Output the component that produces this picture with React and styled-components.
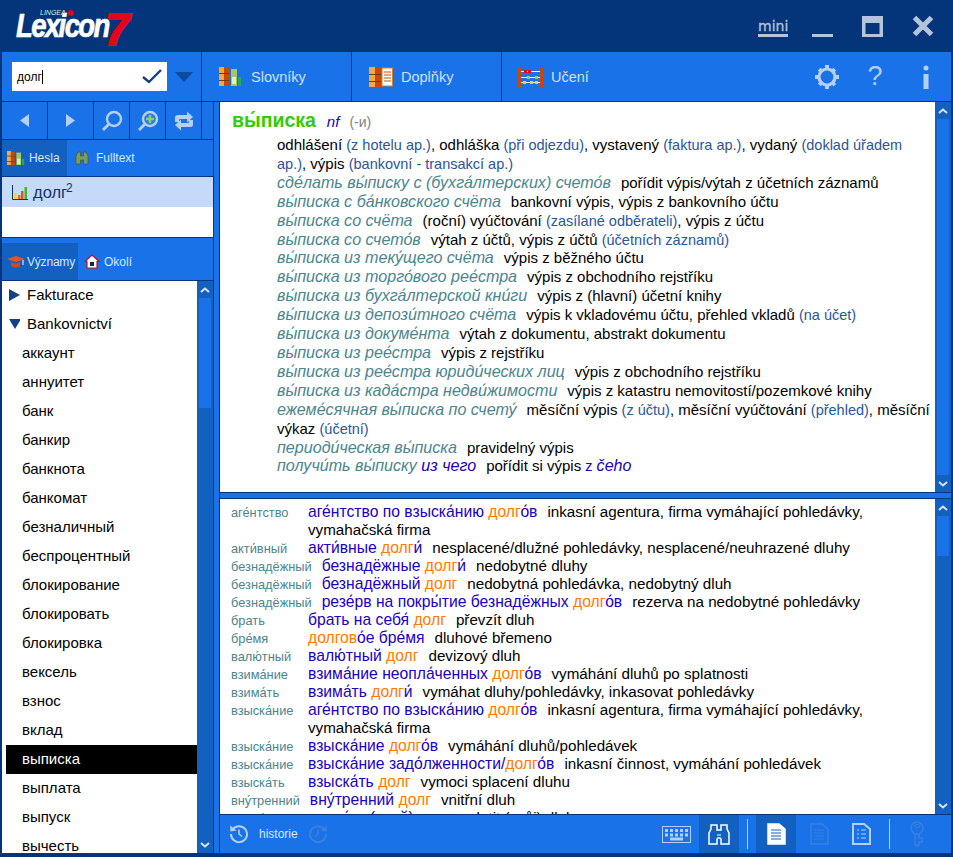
import React from "react";
import styled, { createGlobalStyle } from "styled-components";

const DARK = "#04357a";
const BLUE = "#1a72e8";
const DEEP = "#1260c0";
const PALE = "#b5d0f5";

const Global = createGlobalStyle`
  html, body { margin: 0; padding: 0; background: ${DARK}; }
  * { box-sizing: border-box; }
  body { font-family: "Liberation Sans", Arial, sans-serif; }
`;

const Win = styled.div`
  width: 953px; height: 857px; background: ${DARK}; padding: 0 2px 4px 2px;
  display: flex; flex-direction: column; overflow: hidden;
`;
const TitleBar = styled.header`
  height: 52px; flex: none; display: flex; align-items: center; padding: 0 17px 0 14px;
`;
const Logo = styled.div`
  display: flex; align-items: flex-start; height: 46px; position: relative; color: #fff;
  font-style: italic; font-weight: 700;
`;
const LogoWord = styled.span`
  display: block; width: 90px; font-size: 34px; letter-spacing: -2px; line-height: 34px; margin-top: 5px;
  -webkit-text-stroke: 0.7px #fff; transform: scaleX(.81); transform-origin: 0 50%; white-space: nowrap;
`;
const LogoSeven = styled.span`
  display: block; width: 24px; font-size: 44px; line-height: 40px; color: #e2061c; margin: 7px 0 0 -1px;
  -webkit-text-stroke: 2px #e2061c;
`;
const LogoBrand = styled.span`
  position: absolute; left: 24px; top: 6px; font-size: 7px; font-weight: 400; color: #dfe6f0;
  display: flex; align-items: center; gap: 2px; z-index: 1;
`;
const RedDot = styled.i`
  width: 6px; height: 6px; border-radius: 50%; background: #e2061c; display: block;
`;
const WinControls = styled.div`
  margin-left: auto; display: flex; align-items: center; height: 52px;
`;
const Mini = styled.span`
  color: #b4c4dc; font: 400 14px "DejaVu Sans", sans-serif; border-bottom: 3px solid #b4c4dc; line-height: 15px;
  width: 30px; text-align: center; margin-right: 24px; margin-top: 4px; -webkit-text-stroke: .3px #b4c4dc;
`;
const WinBtn = styled.svg`
  display: block; flex: none; margin-left: ${p => p.$ml || 0}px;
`;

const Toolbar = styled.div`
  height: 50px; flex: none; background: ${BLUE}; border-bottom: 1px solid ${DARK}; display: flex; align-items: stretch;
`;
const SearchCell = styled.div`
  width: 200px; border-right: 1px solid ${DARK}; display: flex; align-items: center; padding: 0 8px 0 10px; gap: 8px;
`;
const SearchBox = styled.div`
  width: 155px; height: 29px; background: #fff; display: flex; align-items: center; padding: 0 5px 0 5px;
  justify-content: space-between; font-size: 12px; color: #000;
`;
const Caret = styled.span`
  display: inline-block; width: 1px; height: 14px; background: #000; vertical-align: -3px;
`;
const ToolBtn = styled.div`
  width: 150px; border-right: ${p => p.$last ? "0" : `1px solid ${DARK}`}; display: flex; align-items: center; gap: ${p => p.$gap || 9}px;
  padding-left: ${p => p.$pl || 17}px; color: #cfe0fa; font-size: 14.5px;
`;
const ToolEnd = styled.div`
  margin-left: auto; display: flex; align-items: center; padding-right: 21px;
`;
const Help = styled.span`
  width: 16px; margin-left: 27px; margin-right: 39px; font-size: 27px; line-height: 27px; color: ${PALE}; text-align: center;
`;

const Body = styled.div`
  flex: 1; min-height: 0; display: flex; background: ${BLUE};
`;
const Left = styled.aside`
  width: 212px; flex: none; display: flex; flex-direction: column; border-right: 1px solid ${DARK};
`;
const NavRow = styled.div`
  height: 38px; flex: none; display: flex; border-bottom: 1px solid ${DARK};
`;
const NavCell = styled.div`
  width: ${p => p.$w}px; flex: none; border-right: 1px solid ${DARK}; display: flex; align-items: center; justify-content: center;
`;
const Tabs = styled.div`
  height: 37px; flex: none; display: flex; border-bottom: ${p => p.$line ? `1px solid ${DARK}` : "0"};
`;
const Tab = styled.div`
  width: ${p => p.$w}px; flex: none; display: flex; align-items: center; background: ${p => p.$on ? DEEP : "transparent"};
  color: #d8e6fb; font-size: 12px; letter-spacing: ${p => p.$ls || 0}px; gap: ${p => p.$gap ?? 4}px; padding-left: ${p => p.$pl ?? 5}px;
`;
const Results = styled.div`
  height: 61px; flex: none; background: #fff; border-bottom: 1px solid ${DARK};
`;
const ResultRow = styled.div`
  height: 30px; background: #c5daf8; display: flex; align-items: center; padding-left: 10px; gap: 5px;
  font-size: 16.5px; color: #14306a;
  sup { font-size: 12px; line-height: 0; position: relative; top: 1px; left: -1px; vertical-align: super; }
`;
const Spacer = styled.div`
  height: 5px; flex: none;
`;
const TreeWrap = styled.div`
  flex: 1; min-height: 0; display: flex; border-top: 1px solid ${DARK};
`;
const Tree = styled.ul`
  flex: 1; min-width: 0; margin: 0; padding: 0; list-style: none; background: #fff; overflow: hidden;
`;
const TreeItem = styled.li`
  height: 29px; display: flex; align-items: center; font-size: 15px; line-height: 28px; padding-bottom: 1px;
  color: ${p => p.$on ? "#fff" : "#000"};
  background: ${p => p.$on ? "#000" : "transparent"}; margin-left: ${p => p.$head ? 0 : 4}px;
  padding-left: ${p => p.$head ? 7 : 16}px; gap: 7px;
`;

const Bar = styled.div`
  width: ${p => p.$w || 16}px; flex: none; display: flex; flex-direction: column; background: ${DEEP};
`;
const BarBtn = styled.div`
  height: 17px; flex: none; display: flex; align-items: center; justify-content: center; background: ${DEEP};
`;
const Thumb = styled.div`
  margin: 0 2px; height: ${p => p.$h}px; flex: ${p => p.$grow ? 1 : "none"}; background: ${BLUE};
`;
const Fill = styled.div`
  flex: 1;
`;

const Gutter = styled.div`
  width: 6px; flex: none; border-right: 1px solid ${DARK};
`;
const Main = styled.main`
  flex: 1; min-width: 0; display: flex; flex-direction: column;
`;
const Panel = styled.section`
  height: ${p => p.$h}px; flex: none; display: flex; background: #fff;
  border-bottom: 1px solid ${DARK}; ${p => p.$top && `border-top: 1px solid ${DARK};`}
`;
const PanelGap = styled.div`
  height: 5px; flex: none;
`;
const Content = styled.div`
  flex: 1; min-width: 0; overflow: hidden;
`;
const Dict = styled(Content)`
  padding: 7px 0 0 12px; font-size: 15px; line-height: 18.9px; color: #000;
`;
const Head = styled.div`
  display: flex; align-items: baseline; height: 27px; line-height: 22px;
`;
const HeadWord = styled.span`
  font-size: 19.5px; font-weight: 700; color: #33cc00; margin-right: 11px;
`;
const Gram = styled.span`
  color: #2000c0; font-style: italic; font-size: 15px; margin-right: 10px;
`;
const GramNote = styled.span`
  color: #808080; font-size: 14px;
`;
const Sense = styled.div`
  padding-left: 45px;
`;
const Ex = styled.i`
  color: #4a8590; font-size: 16.1px; line-height: 1; margin-right: ${p => p.$tight ? 0 : 10}px;
`;
const Note = styled.span`
  color: ${p => p.$ref ? "#2000c0" : "#2a55a0"}; font-size: 14.5px; line-height: 1;
`;
const Pointer = styled.i`
  color: #2000c0; font-size: 16.1px; line-height: 1; margin-right: ${p => p.$gap || 0}px;
`;

const Colloc = styled(Content)`
  padding: 4px 4px 0 0; font-size: 15.2px; line-height: 18px; color: #000;
`;
const Row = styled.div`
  padding-left: 88px; text-indent: -77px;
`;
const Lemma = styled.span`
  display: inline-block; min-width: 67px; margin-right: 10px; text-indent: 0; font-size: 12.8px; line-height: 1; color: #4a8590;
`;
const Phrase = styled.span`
  color: #2000c0; margin-right: 10px; font-size: 15.7px; line-height: 1;
  b { color: #ff7a00; font-weight: 400; }
`;

const Status = styled.footer`
  flex: 1; min-height: 0; display: flex; align-items: stretch; padding-left: 9px; color: #d8e6fb; font-size: 12px;
`;
const Hist = styled.div`
  display: flex; align-items: center; gap: 10px;
`;
const StatusEnd = styled.div`
  margin-left: auto; display: flex; align-items: center; padding-right: 11px;
`;
const StatusBtn = styled.div`
  width: ${p => p.$w}px; height: 100%; flex: none; display: flex; align-items: center; justify-content: center;
  background: ${p => p.$on ? DEEP : "transparent"}; margin-left: ${p => p.$ml || 0}px;
`;
const VSep = styled.div`
  width: 1px; height: 30px; flex: none; background: ${PALE}; margin: 0 ${p => p.$r ?? 8}px 0 ${p => p.$l ?? 8}px;
`;

const Up = () => <svg width="10" height="6" viewBox="0 0 10 6"><path d="M1 5l4-3.5L9 5" fill="none" stroke="#d8e6fb" strokeWidth="2" /></svg>;
const Down = () => <svg width="10" height="6" viewBox="0 0 10 6"><path d="M1 1l4 3.5L9 1" fill="none" stroke="#d8e6fb" strokeWidth="2" /></svg>;

const Books = ({ s = 1 }) => (
  <svg width={23 * s} height={19 * s} viewBox="0 0 23 19">
    <rect x="0" y="0" width="5" height="19" fill="#f7a83c" />
    <rect x="5" y="1" width="5" height="18" fill="#c8480c" />
    <rect x="0" y="6" width="10" height="1" fill="#7a3a10" />
    <rect x="0" y="13" width="10" height="1" fill="#7a3a10" />
    <rect x="12" y="2" width="6" height="17" fill="#a8c85c" />
    <rect x="13" y="10" width="4" height="7" fill="#e6eec0" />
    <rect x="19" y="10" width="3" height="9" fill="#22aa55" />
  </svg>
);
const Sheets = () => (
  <svg width="24" height="20" viewBox="0 0 24 20">
    <rect x="0" y="0" width="6" height="20" fill="#f7a83c" />
    <rect x="6" y="1" width="6" height="19" fill="#c8480c" />
    <rect x="0" y="7" width="12" height="1" fill="#7a3a10" />
    <rect x="0" y="14" width="12" height="1" fill="#7a3a10" />
    <rect x="13" y="1" width="10.500" height="18" fill="#fff" stroke="#e07a20" />
    <path d="M15 5h7M15 8h7M15 11h7M15 14h7" stroke="#c8480c" />
  </svg>
);
const Abacus = () => (
  <svg width="25" height="20" viewBox="0 0 25 20">
    <rect x="0" y="0" width="3" height="20" fill="#c8480c" />
    <rect x="22" y="0" width="3" height="20" fill="#c8480c" />
    <path d="M3 4.500h19M3 10.500h19M3 15.500h19" stroke="#fff" />
    <path d="M6 3h3v3H6zM10 3h3v3h-3z" fill="#e2061c" />
    <path d="M9 9h3v3H9zM17 9h3v3h-3z" fill="#a8c85c" />
    <path d="M5 14h3v3H5zM12 14h3v3h-3zM17 14h3v3h-3z" fill="#ffd21e" />
  </svg>
);
const Gear = () => (
  <svg width="26" height="26" viewBox="0 0 26 26">
    <circle cx="13" cy="13" r="8" fill="none" stroke={PALE} strokeWidth="3.200" />
    <path d="M11 1h4v3.500h-4zM11 21.500h4V25h-4zM1 11h3.500v4H1zM21.500 11H25v4h-3.500zM3.800 6.600l2.800-2.800 2.500 2.500-2.800 2.800zM16.900 6.300l2.500-2.500 2.800 2.800-2.500 2.500zM3.800 19.400l2.500-2.500 2.800 2.800-2.500 2.500zM16.900 19.700l2.500-2.500 2.800 2.500-2.500 2.800z" fill={PALE} />
  </svg>
);
const Glass = ({ plus }) => (
  <svg width="22" height="22" viewBox="0 0 22 22">
    <circle cx="13" cy="9" r="7" fill={plus ? "#2f7fd8" : "none"} stroke={PALE} strokeWidth="2.400" />
    <path d="M8 14l-6 6" stroke={PALE} strokeWidth="2.800" />
    {plus && <path d="M13 5v8M9 9h8" stroke="#8fcf6c" strokeWidth="2.400" />}
  </svg>
);
const Swap = () => (
  <svg width="20" height="20" viewBox="0 0 20 20">
    <path d="M1 11V6.500Q1 4 4 4h9V0.500L19 6l-6 5.500V8H6q-1 0-1 1v2zM19 9v4.500q0 2.500-3 2.500H7v3.500L1 14l6-5.500V12h7q1 0 1-1V9z" fill={PALE} />
  </svg>
);
const Binoc = () => (
  <svg width="14" height="14" viewBox="0 0 14 14">
    <path d="M1 5l2-4h2.500v4h3V1H11l2 4v8H8.500V9h-3v4H1z" fill="#7c9c5c" stroke="#3a5030" strokeWidth=".6" />
  </svg>
);
const BinocLine = () => (
  <svg width="24" height="22" viewBox="0 0 24 22">
    <path d="M2 10l2-4V2h6v5h4V2h6v4l2 4v11h-8v-5l-1-1h-2l-1 1v5H2z" fill="none" stroke="#fff" strokeWidth="1.500" />
    <path d="M10 12h4" stroke="#fff" />
  </svg>
);
const Cap = () => (
  <svg width="19" height="14" viewBox="0 0 19 14">
    <path d="M0 4l9-3 9 3-9 3z" fill="#e8541c" />
    <path d="M4 7v4c3 2 7 2 9 0V7l-4 1.500z" fill="#d8480c" />
    <path d="M16 5v5" stroke="#fff" />
  </svg>
);
const House = () => (
  <svg width="16" height="15" viewBox="0 0 16 15">
    <path d="M8 1l7 6.500h-2V14H3V7.500H1z" fill="#fff" stroke="#d01010" strokeWidth="1.200" />
    <path d="M6 8h4v4H6z" fill="#223" />
  </svg>
);
const ChartIcon = () => (
  <svg width="16" height="15" viewBox="0 0 16 15">
    <path d="M.5 0v14.500H16" fill="none" stroke="#04357a" />
    <rect x="2" y="8" width="2.500" height="6" fill="#ffd21e" />
    <rect x="6" y="10" width="2.500" height="4" fill="#f0662c" />
    <rect x="9" y="6" width="2.500" height="8" fill="#e8541c" />
    <rect x="12.500" y="2" width="2.500" height="12" fill="#48b030" />
  </svg>
);
const Doc = ({ c = "#fff", fill = "none", sw = 1.500, ink, lines = "M4 7h10M4 10h10M4 13h10M4 16h10" }) => (
  <svg width="19" height="22" viewBox="0 0 19 22">
    <path d="M1 1h11l6 5v15H1z" fill={fill} stroke={c} strokeWidth={sw} />
    <path d={lines} stroke={ink || c} strokeWidth="1.200" />
  </svg>
);
const Keyboard = () => (
  <svg width="29" height="17" viewBox="0 0 29 17">
    <rect x=".5" y=".5" width="28" height="16" fill="none" stroke={PALE} />
    <path d="M8 11.500h13v3H8z" fill={PALE} />
    <path d="M3 3h3v3H3zM8 3h3v3H8zM13 3h3v3h-3zM18 3h3v3h-3zM23 3h3v3h-3zM3 7.500h3v3H3zM8 7.500h3v3H8zM13 7.500h3v3h-3zM18 7.500h3v3h-3zM23 7.500h3v3h-3z" fill={PALE} />
  </svg>
);
const Clock = ({ c, flip }) => (
  <svg width="20" height="20" viewBox="0 0 20 20" style={flip ? { transform: "scaleX(-1)" } : undefined}>
    <path d="M3.500 5.500A8 8 0 1 1 2 10" fill="none" stroke={c} strokeWidth="2" />
    <path d="M1 1.500l.5 6 6-1z" fill={c} />
    <path d="M10 5.500V10l3 2.500" fill="none" stroke={c} strokeWidth="1.600" />
  </svg>
);
const Key = () => (
  <svg width="16" height="26" viewBox="0 0 16 26">
    <circle cx="8" cy="7" r="6" fill="none" stroke="#3a80dc" strokeWidth="1.600" />
    <ellipse cx="8" cy="5" rx="3" ry="1.500" fill="none" stroke="#3a80dc" />
    <path d="M6 13v11l2 1 2-1v-3h3v-4h-3v-4" fill="none" stroke="#3a80dc" strokeWidth="1.400" />
  </svg>
);

const treeItems = ["аккаунт", "аннуитет", "банк", "банкир", "банкнота", "банкомат", "безналичный", "беспроцентный", "блокирование", "блокировать", "блокировка", "вексель", "взнос", "вклад", "выписка", "выплата", "выпуск", "вычесть"];

const senses = [
  [["Ex", "сде́лать вы́писку с (бухга́лтерских) счето́в"], ["T", "pořídit výpis/výtah z účetních záznamů"]],
  [["Ex", "вы́писка с ба́нковского счёта"], ["T", "bankovní výpis, výpis z bankovního účtu"]],
  [["Ex", "вы́писка со счёта"], ["T", "(roční) vyúčtování "], ["N", "(zasílané odběrateli)"], ["T", ", výpis z účtu"]],
  [["Ex", "вы́писка со счето́в"], ["T", "výtah z účtů, výpis z účtů "], ["N", "(účetních záznamů)"]],
  [["Ex", "вы́писка из теку́щего счёта"], ["T", "výpis z běžného účtu"]],
  [["Ex", "вы́писка из торго́вого рее́стра"], ["T", "výpis z obchodního rejstříku"]],
  [["Ex", "вы́писка из бухга́лтерской кни́ги"], ["T", "výpis z (hlavní) účetní knihy"]],
  [["Ex", "вы́писка из депози́тного счёта"], ["T", "výpis k vkladovému účtu, přehled vkladů "], ["N", "(na účet)"]],
  [["Ex", "вы́писка из докуме́нта"], ["T", "výtah z dokumentu, abstrakt dokumentu"]],
  [["Ex", "вы́писка из рее́стра"], ["T", "výpis z rejstříku"]],
  [["Ex", "вы́писка из рее́стра юриди́ческих лиц"], ["T", "výpis z obchodního rejstříku"]],
  [["Ex", "вы́писка из када́стра недви́жимости"], ["T", "výpis z katastru nemovitostí/pozemkové knihy"]],
  [["Ex", "ежеме́сячная вы́писка по счету́"], ["T", "měsíční výpis "], ["N", "(z účtu)"], ["T", ", měsíční vyúčtování "], ["N", "(přehled)"], ["T", ", měsíční výkaz "], ["N", "(účetní)"]],
  [["Ex", "периоди́ческая вы́писка"], ["T", "pravidelný výpis"]],
];

const rows = [
  ["аге́нтство", ["аге́нтство по взыска́нию ", "долг", "о́в"], "inkasní agentura, firma vymáhající pohledávky, vymahačská firma"],
  ["акти́вный", ["акти́вные ", "долг", "и́"], "nesplacené/dlužné pohledávky, nesplacené/neuhrazené dluhy"],
  ["безнадёжный", ["безнадёжные ", "долг", "и́"], "nedobytné dluhy"],
  ["безнадёжный", ["безнадёжный ", "долг", ""], "nedobytná pohledávka, nedobytný dluh"],
  ["безнадёжный", ["резе́рв на покры́тие безнадёжных ", "долг", "о́в"], "rezerva na nedobytné pohledávky"],
  ["брать", ["брать на себя́ ", "долг", ""], "převzít dluh"],
  ["бре́мя", ["", "долгов", "о́е бре́мя"], "dluhové břemeno"],
  ["валю́тный", ["валю́тный ", "долг", ""], "devizový dluh"],
  ["взима́ние", ["взима́ние неопла́ченных ", "долг", "о́в"], "vymáhání dluhů po splatnosti"],
  ["взима́ть", ["взима́ть ", "долг", "и́"], "vymáhat dluhy/pohledávky, inkasovat pohledávky"],
  ["взыска́ние", ["аге́нтство по взыска́нию ", "долг", "о́в"], "inkasní agentura, firma vymáhající pohledávky, vymahačská firma"],
  ["взыска́ние", ["взыска́ние ", "долг", "о́в"], "vymáhání dluhů/pohledávek"],
  ["взыска́ние", ["взыска́ние задо́лженности/", "долг", "о́в"], "inkasní činnost, vymáhání pohledávek"],
  ["взыска́ть", ["взыска́ть ", "долг", ""], "vymoci splacení dluhu"],
  ["вну́тренний", ["вну́тренний ", "долг", ""], "vnitřní dluh"],
  ["верну́ть", ["верну́ть (свой) ", "долг", ""], "splatit (svůj) dluh"],
];

export default function App() {
  return (
    <Win>
      <Global />
      <TitleBar>
        <Logo>
          <LogoBrand>LINGEA<RedDot /></LogoBrand>
          <LogoWord>Lexicon</LogoWord>
          <LogoSeven>7</LogoSeven>
        </Logo>
        <WinControls>
          <Mini>mini</Mini>
          <WinBtn width="21" height="21" viewBox="0 0 21 21"><rect y="18" width="21" height="3" fill="#b4c4dc" /></WinBtn>
          <WinBtn $ml="29" width="21" height="21" viewBox="0 0 21 21"><path d="M0 0h21v21H0zM3.500 7v11h14V7z" fill="#b4c4dc" fillRule="evenodd" /></WinBtn>
          <WinBtn $ml="29" width="22" height="22" viewBox="0 0 22 22"><path d="M2.500 2.500l17 17M19.500 2.500l-17 17" stroke="#b4c4dc" strokeWidth="5" /></WinBtn>
        </WinControls>
      </TitleBar>

      <Toolbar>
        <SearchCell>
          <SearchBox>
            <span>долг<Caret /></span>
            <svg width="20" height="15" viewBox="0 0 20 15"><path d="M1 8l6 5L19 1" fill="none" stroke="#123f7c" strokeWidth="2.400" /></svg>
          </SearchBox>
          <svg width="18" height="10" viewBox="0 0 18 10"><path d="M0 0h18L9 10z" fill="#0d4aa0" /></svg>
        </SearchCell>
        <ToolBtn><Books />Slovníky</ToolBtn>
        <ToolBtn $gap={8}><Sheets />Doplňky</ToolBtn>
        <ToolBtn $last $pl={16} $gap={8}><Abacus />Učení</ToolBtn>
        <ToolEnd>
          <Gear />
          <Help>?</Help>
          <svg width="8" height="24" viewBox="0 0 8 24"><path d="M1.500 3a2.500 2.500 0 1 1 5 0 2.500 2.500 0 1 1-5 0zM1.500 9h5v15h-5z" fill={PALE} /></svg>
        </ToolEnd>
      </Toolbar>

      <Body>
        <Left>
          <NavRow>
            <NavCell $w={46}><svg width="9" height="13" viewBox="0 0 9 13"><path d="M9 0v13L0 6.500z" fill={PALE} /></svg></NavCell>
            <NavCell $w={46}><svg width="9" height="13" viewBox="0 0 9 13"><path d="M0 0v13l9-6.500z" fill={PALE} /></svg></NavCell>
            <NavCell $w={36}><Glass /></NavCell>
            <NavCell $w={36}><Glass plus /></NavCell>
            <NavCell $w={36}><Swap /></NavCell>
          </NavRow>
          <Tabs $line>
            <Tab $w={65} $on><Books s={0.78} />Hesla</Tab>
            <Tab $w={80} $gap={7} $pl={8}><Binoc />Fulltext</Tab>
          </Tabs>
          <Results>
            <ResultRow><ChartIcon /><span>долг<sup>2</sup></span></ResultRow>
          </Results>
          <Spacer />
          <Tabs>
            <Tab $w={76} $gap={1} $ls={-0.2} $on><Cap />Významy</Tab>
            <Tab $w={70} $gap={4} $pl={6}><House />Okolí</Tab>
          </Tabs>
          <TreeWrap>
            <Tree>
              <TreeItem $head><svg width="11" height="12" viewBox="0 0 11 12"><path d="M0 0v12l11-6z" fill="#14408a" /></svg>Fakturace</TreeItem>
              <TreeItem $head><svg width="11" height="12" viewBox="0 0 11 12"><path d="M0 1h12L6 11z" fill="#14408a" /></svg>Bankovnictví</TreeItem>
              {treeItems.map(t => <TreeItem key={t} $on={t === "выписка"}>{t}</TreeItem>)}
            </Tree>
            <Bar>
              <BarBtn><Up /></BarBtn>
              <Thumb $h={110} />
              <Fill />
              <BarBtn><Down /></BarBtn>
            </Bar>
          </TreeWrap>
        </Left>
        <Gutter />
        <Main>
          <Panel $h={391}>
            <Dict>
              <Head>
                <HeadWord>вы́писка</HeadWord>
                <Gram>nf</Gram>
                <GramNote>(-и)</GramNote>
              </Head>
              <Sense>
                odhlášení <Note>(z hotelu ap.)</Note>, odhláška <Note>(při odjezdu)</Note>, vystavený <Note>(faktura ap.)</Note>, vydaný <Note>(doklad úřadem ap.)</Note>, výpis <Note>(bankovní - transakcí ap.)</Note>
              </Sense>
              {senses.map((s, i) => (
                <Sense key={i}>
                  {s.map(([k, t], j) => k === "Ex" ? <Ex key={j}>{t}</Ex> : k === "N" ? <Note key={j}>{t}</Note> : <span key={j}>{t}</span>)}
                </Sense>
              ))}
              <Sense>
                <Ex $tight>получи́ть вы́писку </Ex><Pointer $gap={10}>из чего</Pointer>
                pořídit si výpis <Note $ref>z </Note><Pointer>čeho</Pointer>
              </Sense>
            </Dict>
            <Bar>
              <BarBtn><Up /></BarBtn>
              <Thumb $grow />
              <BarBtn><Down /></BarBtn>
            </Bar>
          </Panel>
          <PanelGap />
          <Panel $h={317} $top>
            <Colloc>
              {rows.map((r, i) => (
                <Row key={i}>
                  <Lemma>{r[0]}</Lemma>
                  <Phrase>{r[1][0]}<b>{r[1][1]}</b>{r[1][2]}</Phrase>
                  {r[2]}
                </Row>
              ))}
            </Colloc>
            <Bar>
              <BarBtn><Up /></BarBtn>
              <Thumb $h={40} />
              <Fill />
              <BarBtn><Down /></BarBtn>
            </Bar>
          </Panel>
          <Status>
            <Hist>
              <Clock c={PALE} />
              <span>historie</span>
              <Clock c="#3a80dc" flip />
            </Hist>
            <StatusEnd>
              <Keyboard />
              <StatusBtn $w={40} $on $ml={8}><BinocLine /></StatusBtn>
              <VSep />
              <StatusBtn $w={40} $on><Doc fill="#fff" c="#fff" ink={DEEP} /></StatusBtn>
              <StatusBtn $w={46}><Doc c="#3a80dc" /></StatusBtn>
              <StatusBtn $w={38}><Doc c={PALE} sw={2} lines="M5 7h2M9 7h5M5 11h2M9 11h5M5 15h2M9 15h5" /></StatusBtn>
              <VSep $l={9} $r={4} />
              <StatusBtn $w={46}><Key /></StatusBtn>
            </StatusEnd>
          </Status>
        </Main>
      </Body>
    </Win>
  );
}
